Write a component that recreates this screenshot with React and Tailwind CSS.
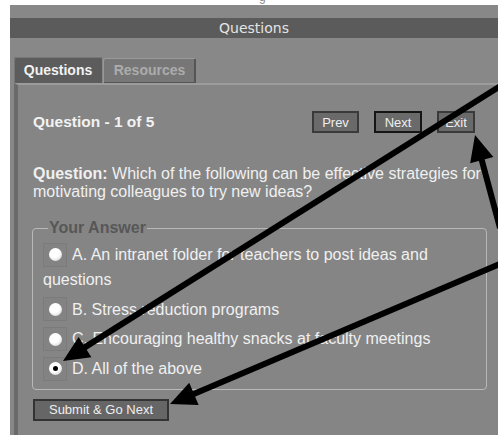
const options = [
  { key: "A", label: "A. An intranet folder for teachers to post ideas and questions" },
  { key: "B", label: "B. Stress reduction programs" },
  { key: "C", label: "C. Encouraging healthy snacks at faculty meetings" },
  { key: "D", label: "D. All of the above", checked: true },
];

// callout arrows: start point off the right edge, tip on the target
const arrows = [
  { from: [502, 85], to: [63, 361] },
  { from: [500, 228], to: [475, 135] },
  { from: [502, 263], to: [170, 404] },
];

function headPoints([x1, y1], [x2, y2], len = 26, half = 12) {
  const dx = x2 - x1;
  const dy = y2 - y1;
  const d = Math.hypot(dx, dy);
  const ux = dx / d;
  const uy = dy / d;
  const bx = x2 - ux * len;
  const by = y2 - uy * len;
  return `${x2},${y2} ${bx - uy * half},${by + ux * half} ${bx + uy * half},${by - ux * half}`;
}

function shaftEnd([x1, y1], [x2, y2], back = 20) {
  const d = Math.hypot(x2 - x1, y2 - y1);
  return [x2 - ((x2 - x1) / d) * back, y2 - ((y2 - y1) / d) * back];
}

function Arrows() {
  return (
    <svg className="absolute inset-0 pointer-events-none" width="498" height="435" viewBox="0 0 498 435">
      {arrows.map((a, i) => {
        const [ex, ey] = shaftEnd(a.from, a.to);
        return (
          <g key={i}>
            <line x1={a.from[0]} y1={a.from[1]} x2={ex} y2={ey} stroke="#000" strokeWidth="6" />
            <polygon points={headPoints(a.from, a.to)} fill="#000" />
          </g>
        );
      })}
    </svg>
  );
}

function Radio({ checked }) {
  return (
    <span className="inline-flex items-center justify-center w-[24px] h-[24px] bg-[#838383] border border-[#7b7b7b] align-middle mr-[5px]">
      <span className="w-[13px] h-[13px] rounded-full bg-[radial-gradient(circle_at_40%_35%,#ffffff_45%,#c4c4c4_100%)] flex items-center justify-center">
        {checked && <span className="w-[5px] h-[5px] rounded-full bg-black" />}
      </span>
    </span>
  );
}

function NavButton({ children, dark, w }) {
  return (
    <button
      className={`h-[22px] ${w} bg-[#6a6a6a] text-[#eeeeee] text-[13px] leading-none border-2 ${
        dark ? "border-[#151515]" : "border-[#3a3a3a]"
      }`}
    >
      {children}
    </button>
  );
}

export default function App() {
  return (
    <div className="relative w-[498px] h-[435px] overflow-hidden bg-white" style={{ fontFamily: "'Liberation Sans', Arial, sans-serif" }}>
      <div className="absolute left-[259px] top-[-10px] text-[12px] leading-[14px] text-[#8a8a8a]">g</div>
      <div className="ml-[10px] mt-[5px] h-[430px] bg-[#888888] pt-[13px]">
        {/* header strip */}
        <div className="h-[20px] bg-[#5b5b5b] flex items-center justify-center text-[14px] text-[#e4e4e4]" style={{ fontFamily: "'DejaVu Sans', sans-serif" }}>
          Questions
        </div>

        {/* tabs */}
        <div className="flex items-end pl-[4px] mt-[19px] h-[26px]">
          <div className="h-[26px] w-[88px] flex items-center justify-center bg-[#5c5c5c] rounded-t-[2px] text-[14px] font-bold text-[#f2f2f2] shadow-[inset_1px_1px_0_#777]">
            Questions
          </div>
          <div className="h-[25px] w-[93px] ml-[1px] flex items-center justify-center bg-[#777777] rounded-t-[2px] text-[14px] font-bold text-[#acacac] shadow-[inset_1px_1px_0_#999,inset_-2px_-1px_0_#555]">
            Resources
          </div>
        </div>

        {/* content */}
        <div className="ml-[4px] h-[360px] bg-[#858585] border-l-[4px] border-l-[#6a6a6a] border-t-[2px] border-t-[#9c9c9c] pl-[15px] pr-[10px]">
          <div className="flex items-center h-[24px] mt-[25px]">
            <div className="text-[15.5px] font-bold text-[#f2f2f2]">Question - 1 of 5</div>
            <div className="ml-auto flex gap-[15px] mr-[13px]">
              <NavButton w="w-[47px]">Prev</NavButton>
              <NavButton w="w-[48px]" dark>Next</NavButton>
              <NavButton w="w-[38px]">Exit</NavButton>
            </div>
          </div>

          <p className="mt-[31px] text-[16px] leading-[18px] text-[#f0f0f0]">
            <span className="font-bold">Question:</span> Which of the following can be effective strategies for motivating colleagues to try new ideas?
          </p>

          <fieldset className="mt-[17px] ml-[-1px] w-[455px] border border-[#b8b8b8] rounded-[4px] pl-[10px] pr-[8px] pb-[8px]">
            <legend className="px-[1px] ml-[5px] text-[16px] leading-[20px] font-bold text-[#575757]">Your Answer</legend>
            <div className="flex flex-col gap-[5px] mt-[4px]">
              {options.map((o) => (
                <div key={o.key} className="text-[16px] leading-[24px] text-[#f0f0f0]">
                  <Radio checked={o.checked} />
                  <span className="align-middle">{o.label}</span>
                </div>
              ))}
            </div>
          </fieldset>

          <button className="mt-[9px] h-[22px] w-[136px] bg-[#666666] border-2 border-[#333333] text-[13px] leading-none text-[#eeeeee]">
            Submit &amp; Go Next
          </button>
        </div>
      </div>
      <Arrows />
    </div>
  );
}
